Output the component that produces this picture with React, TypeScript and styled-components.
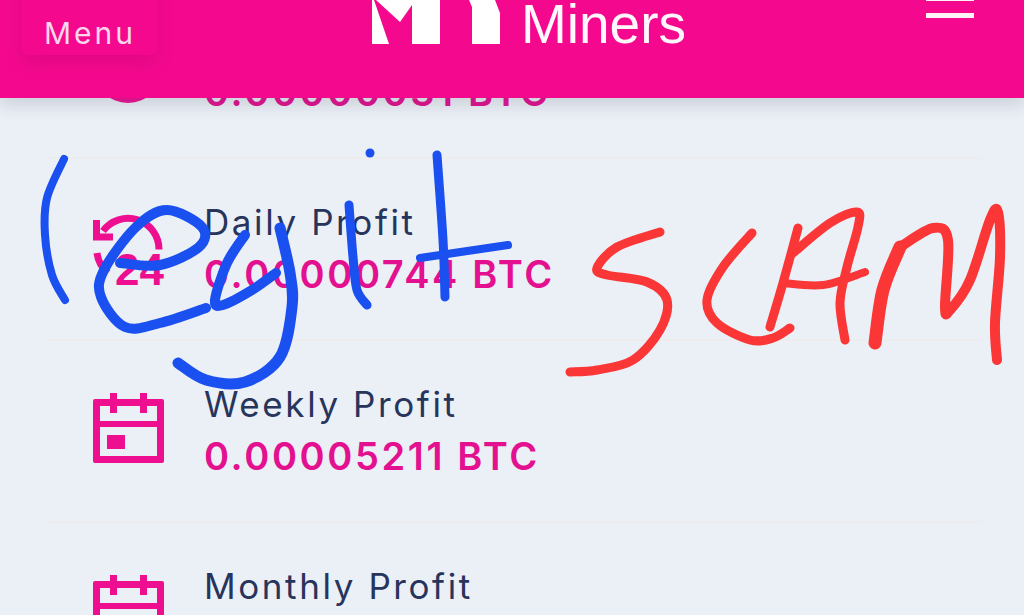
import styled, { createGlobalStyle } from 'styled-components'

const GlobalStyle = createGlobalStyle`
  html, body { margin: 0; padding: 0; background: #ebeff6; }
`
const Page = styled.div`
  position: relative;
  width: 1024px; height: 615px; overflow: hidden;
  background: #ebeff6;
  font-family: Inter, "Open Sans", "Liberation Sans", sans-serif;
`
const Header = styled.header`
  position: relative; z-index: 2;
  display: flex; align-items: flex-start;
  height: 98px; padding: 0 50px 0 22px; box-sizing: border-box;
  background: #f4098e;
  box-shadow: 0 6px 16px rgba(60, 70, 90, 0.2);
`
const MenuButton = styled.button`
  display: flex; align-items: flex-end;
  width: 135px; height: 85px; margin-top: -30px; padding: 0 0 7px 22px;
  box-sizing: border-box;
  background: #f4098e; color: #fbd6ec;
  border: none; border-radius: 6px;
  box-shadow: 0 8px 18px rgba(150, 0, 90, 0.2);
  font: 400 30px/1 Inter, "Open Sans", sans-serif;
  letter-spacing: 3px;
`
const Logo = styled.div`
  display: flex; align-items: flex-start; gap: 21px;
  margin-left: 215px;
`
const LogoMark = styled.svg`
  display: block; width: 128px; height: 44px;
`
const LogoText = styled.span`
  margin-top: 2px;
  color: #fff7fc;
  font: 400 55px/44px "Liberation Sans", Arial, sans-serif;
`
const Burger = styled.div`
  display: flex; flex-direction: column; gap: 12px;
  width: 48px; margin-left: auto;
`
const BurgerLine = styled.span`
  display: block; height: 5px; background: #fff3fa;
  &:first-child { margin-top: -4px; }
`
const List = styled.main`
  margin-top: -121px;
  padding: 0 42px 0 44px;
`
const Row = styled.section`
  display: grid; grid-template-columns: 71px 1fr; column-gap: 40px; align-items: start;
  height: 182px; padding: 41px 0 0 49px; box-sizing: border-box;
  border-bottom: 2px solid #ecedec;
`
const IconBox = styled.svg<{ $top: number }>`
  display: block; width: 71px; height: 71px; overflow: visible;
  margin-top: ${({ $top }) => $top}px;
  color: #ed0f90;
`
const Label = styled.div`
  color: #27345c;
  font-size: 35px; line-height: 44px; font-weight: 400;
  letter-spacing: 2.6px;
`
const Value = styled.div`
  margin-top: 8px;
  color: #e3108f;
  font-size: 38px; line-height: 44px; font-weight: 600;
  letter-spacing: 2.6px;
`
const Ink = styled.svg`
  position: absolute; inset: 0; z-index: 3;
  width: 1024px; height: 615px;
  pointer-events: none;
`

type Pt = [number, number]

// catmull-rom through the sampled pen points
function smooth(p: Pt[]) {
  let d = `M${p[0][0]} ${p[0][1]}`
  for (let i = 0; i < p.length - 1; i++) {
    const a = p[Math.max(i - 1, 0)], b = p[i], c = p[i + 1], e = p[Math.min(i + 2, p.length - 1)]
    const c1 = [b[0] + (c[0] - a[0]) / 6, b[1] + (c[1] - a[1]) / 6]
    const c2 = [c[0] - (e[0] - b[0]) / 6, c[1] - (e[1] - b[1]) / 6]
    d += `C${c1[0]} ${c1[1]} ${c2[0]} ${c2[1]} ${c[0]} ${c[1]}`
  }
  return d
}

const blueStrokes: { w: number; pts: Pt[] }[] = [
  { w: 8, pts: [[64, 159], [47, 198], [45, 235], [52, 275], [65, 300]] },
  { w: 10, pts: [[120, 263], [160, 265], [199, 247], [202, 227], [167, 210], [136, 227], [104, 270], [101, 297], [125, 327], [160, 323], [206, 308]] },
  { w: 10, pts: [[245, 235], [227, 263], [215, 300], [223, 305], [252, 290], [276, 273]] },
  { w: 11, pts: [[280, 228], [290, 273], [292, 307], [280, 357], [245, 382], [206, 380], [178, 363]] },
  { w: 9, pts: [[349, 205], [353, 257], [357, 290], [367, 305]] },
  { w: 9, pts: [[437, 155], [443, 240], [445, 297]] },
  { w: 8, pts: [[420, 258], [508, 245]] },
]
const redStrokes: { w: number; pts: Pt[] }[] = [
  { w: 9, pts: [[660, 232], [617, 247], [597, 268], [607, 275], [647, 282], [667, 300], [660, 330], [633, 360], [597, 370], [570, 372]] },
  { w: 9, pts: [[752, 233], [723, 267], [707, 300], [717, 323], [750, 340], [773, 338], [790, 328]] },
  { w: 9, pts: [[798, 228], [783, 283], [770, 327]] },
  { w: 9, pts: [[793, 253], [830, 223], [857, 212], [858, 227], [847, 267], [840, 303], [845, 340]] },
  { w: 8, pts: [[783, 283], [823, 285], [865, 272]] },
  { w: 13, pts: [[875, 343], [883, 290], [900, 247]] },
  { w: 10, pts: [[900, 247], [933, 228], [948, 240], [945, 307], [950, 310], [970, 280], [990, 220], [998, 212], [1000, 257], [995, 323], [997, 360]] },
]

function CalendarIcon() {
  return (
    <IconBox $top={11} viewBox="0 0 71 71">
      <path
        fill="currentColor"
        fillRule="evenodd"
        d="M17 0h7v6h23V0h7v6h15q2 0 2 2v60q0 2-2 2H2q-2 0-2-2V8q0-2 2-2h15zM7 13v15h57V13H54v7h-7v-7H24v7h-7v-7zM7 34v29h57V34zM14 42h18v14H14z"
      />
    </IconBox>
  )
}

function DailyIcon() {
  return (
    <IconBox $top={15} viewBox="0 0 71 71">
      <path fill="none" stroke="currentColor" strokeWidth="7" d="M10 16A31 31 0 0 1 66 34.5" />
      <path fill="none" stroke="currentColor" strokeWidth="7" d="M3.5 5V22H20" />
      <path fill="none" stroke="currentColor" strokeWidth="7" d="M4 38A31 31 0 0 0 15 58" />
      <text x="22" y="70" fill="currentColor" fontFamily="Liberation Sans, sans-serif" fontSize="44" fontWeight="700">24</text>
    </IconBox>
  )
}

function CoinIcon() {
  return (
    <IconBox $top={15} viewBox="0 0 71 71">
      <circle cx="35" cy="35" r="35" fill="currentColor" />
    </IconBox>
  )
}

export default function App() {
  return (
    <Page>
      <GlobalStyle />
      <Header>
        <MenuButton>Menu</MenuButton>
        <Logo>
          <LogoMark viewBox="0 0 128 44">
            <path fill="#fff" d="M0 0H2L17 44H0Z" />
            <path fill="#fff" d="M4 0L28 22L40 5V44H68V0Z" />
            <path fill="#fff" d="M97 0H123L128 13V44H100V7Z" />
          </LogoMark>
          <LogoText>Miners</LogoText>
        </Logo>
        <Burger>
          <BurgerLine />
          <BurgerLine />
        </Burger>
      </Header>
      <List>
        <Row>
          <CoinIcon />
          <div>
            <Label>Hourly Profit</Label>
            <Value>0.00000031 BTC</Value>
          </div>
        </Row>
        <Row>
          <DailyIcon />
          <div>
            <Label>Daily Profit</Label>
            <Value>0.00000744 BTC</Value>
          </div>
        </Row>
        <Row>
          <CalendarIcon />
          <div>
            <Label>Weekly Profit</Label>
            <Value>0.00005211 BTC</Value>
          </div>
        </Row>
        <Row>
          <CalendarIcon />
          <div>
            <Label>Monthly Profit</Label>
          </div>
        </Row>
      </List>
      <Ink viewBox="0 0 1024 615" fill="none" strokeLinecap="round" strokeLinejoin="round">
        <g stroke="#1a4ff0">
          {blueStrokes.map((s, i) => <path key={i} d={smooth(s.pts)} strokeWidth={s.w} />)}
        </g>
        <circle cx="370" cy="153" r="4.5" fill="#1a4ff0" />
        <g stroke="#fb3636">
          {redStrokes.map((s, i) => <path key={i} d={smooth(s.pts)} strokeWidth={s.w} />)}
        </g>
      </Ink>
    </Page>
  )
}
